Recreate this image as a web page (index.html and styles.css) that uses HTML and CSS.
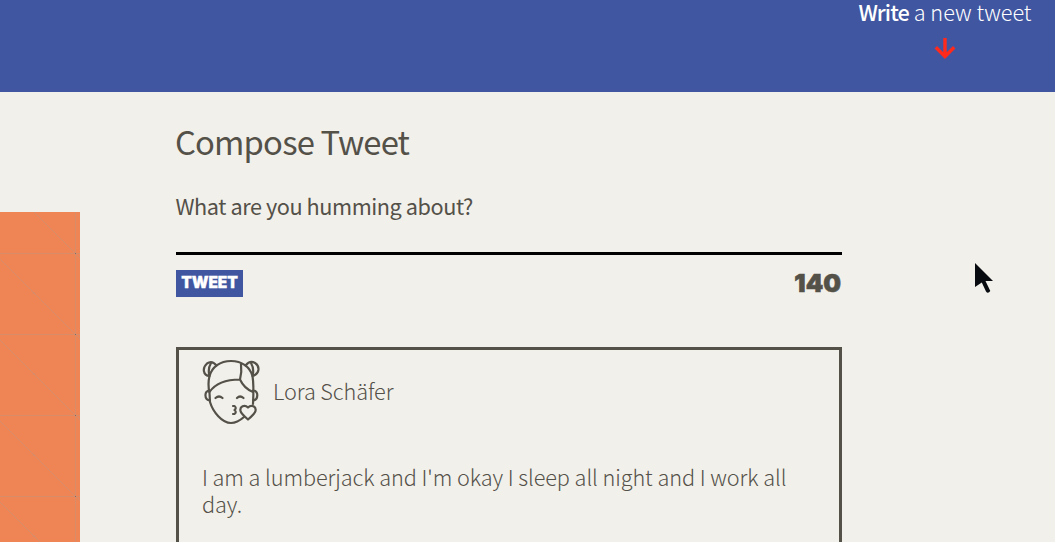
FILE: index.html
```
<!DOCTYPE html>
<html lang="en">
<head>
<meta charset="utf-8">
<title>Compose Tweet</title>
<link rel="stylesheet" href="styles.css">
</head>
<body>
<nav class="topbar">
  <div class="new-tweet">
    <div class="new-label"><b>Write</b> a new tweet</div>
    <svg class="arrow" width="24" height="24" viewBox="0 0 24 24"><path d="M12 2V20M2.8 11.3L12 20.5L21.2 11.3"/></svg>
  </div>
</nav>
<div class="layout">
  <aside class="side">
    <svg width="80" height="330" viewBox="0 0 80 330">
      <path class="mesh-line" d="M75.5 0V330M0 41.5H80M0 122.5H80M0 203.5H80M0 284.5H80"/>
      <path class="mesh-diagonal" d="M34 0L80 46M0 47L80 127M0 128L80 208M0 209L80 289M0 290L40 330M32.5 81H35.500M32.500 162H35.500M32.500 243H35.500M32.500 324H35.500"/>
      <path class="mesh-dot" d="M75 41h1v1h-1zM75 122h1v1h-1zM75 203h1v1h-1zM75 284h1v1h-1z"/>
    </svg>
  </aside>
  <main class="content">
    <section class="compose">
      <h1>Compose Tweet</h1>
      <div class="prompt">What are you humming about?</div>
      <div class="controls">
        <button class="submit">TWEET</button>
        <output class="counter">140</output>
      </div>
    </section>
    <article class="tweet">
      <header class="author">
        <svg class="avatar" width="58" height="66" viewBox="0 0 58 66">
          <path d="M7.5 17C10 8 18 2 29 2S48 8 50.5 17Q52 26 51 45M7.5 17Q5.5 25 7.5 34L8 43C11 53 20 64 29 64C34 64 38 61.500 42 58"/>
          <path d="M7.500 33C13 25 24 20.500 38 20.500C41 27 46 31 51 33M38 20.500Q40 13 39 5"/>
          <path d="M7.500 17C1 16.500 0 9 5 4.500Q10 1 14.500 6.500M7.500 17Q5.500 10 9 4M50.500 17C58 15 58 7 53 4Q48 1 43.500 6.500M50.500 17Q52.500 10 49 4"/>
          <path d="M7.500 31.500C2 31.500 2 41 8 41.500M51 31.500C57 31.500 56.500 41 51 41.500M13.500 39Q17 36 20.500 39M35 39Q38 36 41.500 39M31 47H32.500Q35 49 32.500 51Q35 53 32.500 55H31"/>
          <path class="heart" d="M46 48.500C42.500 45 37.500 47.500 38.500 52Q39 54.500 46 60.500Q53 54.500 53.500 52C54.500 47.500 49.500 45 46 48.500Z"/>
        </svg>
        <span class="name">Lora Schäfer</span>
      </header>
      <p class="message">I am a lumberjack and I'm okay I sleep all night and I work all day.</p>
    </article>
  </main>
</div>
<svg class="cursor" width="20" height="32" viewBox="0 0 20 32"><path d="M0 0L18 18H10.500L15.300 28Q13 31.300 11 28.500L6.800 19.500L0 24Z"/></svg>
</body>
</html>
```
FILE: styles.css
```
* { box-sizing: border-box; }
body {
  margin: 0;
  height: 542px;
  overflow: hidden;
  background: #f2f0eb;
  color: #545149;
  font-family: "Noto Sans CJK JP", "Open Sans", sans-serif;
  font-size: 21.7px;
  font-weight: 300;
  line-height: 27px;
}
.topbar {
  height: 92px;
  display: flex;
  justify-content: flex-end;
  padding-right: 23.5px;
  background: #4056a1;
  color: #fff;
}
.new-tweet {
  display: flex;
  flex-direction: column;
  align-items: center;
}
.new-label { white-space: nowrap; line-height: 23px; }
.new-label b { font-weight: 500; letter-spacing: -.9px; }
.arrow { margin-top: 13px; fill: none; stroke: #ff2a1c; stroke-width: 3.4; }
.layout { display: flex; height: 450px; overflow: hidden; }
.side { width: 80px; margin-top: 120px; background: #ef8454; }
.side svg { display: block; }
.mesh-line { stroke: #b89988; stroke-opacity: .4; fill: none; }
.mesh-diagonal { stroke: #b89988; stroke-opacity: .6; stroke-width: .7; fill: none; }
.mesh-dot { fill: #806f69; }
.content { width: 666px; margin-left: 96px; padding-top: 29px; }
h1 { margin: 0 0 0 -1px; font-size: 32.8px; font-weight: 400; line-height: 40px; letter-spacing: -.85px; }
.prompt {
  height: 94px;
  padding-top: 31px;
  border-bottom: 3px solid #000;
  font-weight: 400;
  letter-spacing: -.44px;
  text-indent: -.5px;
}
.controls { display: flex; justify-content: space-between; padding-top: 15px; }
.submit {
  width: 67px;
  height: 27px;
  padding: 0 0 2px;
  border: 0;
  background: #4056a1;
  color: #fff;
  font: 900 15.5px/25px Inter, sans-serif;
  letter-spacing: -.1px;
  -webkit-text-stroke: .3px #fff;
}
.counter { font: 900 25px/27px Inter, sans-serif; padding-right: 1px; -webkit-text-stroke: .6px #545149; }
.tweet { height: 230px; margin-top: 50px; padding: 9px 24px 0 23px; border: 3px solid #545149; }
.author { display: flex; height: 66px; gap: 13px; }
.avatar { fill: none; stroke: #545149; stroke-width: 2.2; stroke-linejoin: round; stroke-linecap: round; }
.heart { fill: #f2f0eb; }
.name { padding-top: 18px; letter-spacing: -.1px; }
.message { margin: 38px 0 0; letter-spacing: -.08px; }
.cursor { position: absolute; left: 975px; top: 263px; fill: #080c10; }
```
